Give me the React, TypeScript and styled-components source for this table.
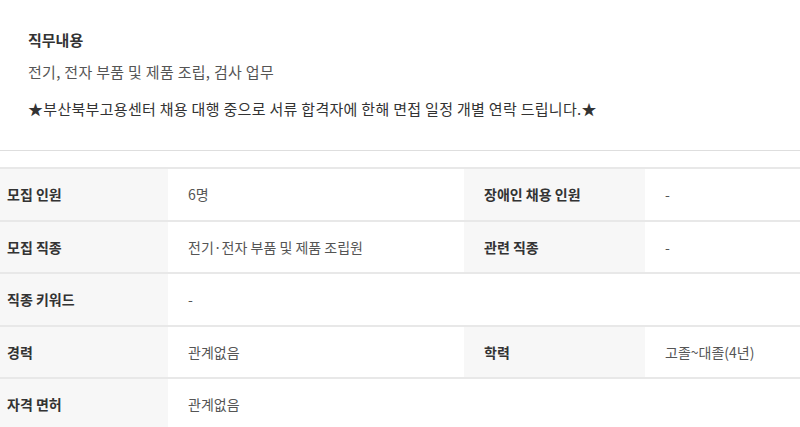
import styled, { createGlobalStyle } from 'styled-components';

const GlobalStyle = createGlobalStyle`
  body {
    margin: 0;
    background: #fff;
    font-family: "Noto Sans CJK KR", "Noto Sans", sans-serif;
    font-size: 14px;
    color: #333;
  }
`;

const Intro = styled.section`
  padding: 30px 28px 31px;
  border-bottom: 1px solid #dedede;
`;

const Title = styled.h3`
  margin: 0;
  font-size: 15px;
  line-height: 20px;
  font-weight: 700;
  color: #333;
`;

const Desc = styled.p<{ $gap: number; $dark?: boolean }>`
  margin: ${(p) => p.$gap}px 0 0;
  line-height: 20px;
  font-size: 15px;
  letter-spacing: 0.3px;
  color: ${(p) => (p.$dark ? '#333' : '#555')};
`;

const Table = styled.div`
  margin-top: 16px;
  display: grid;
  grid-template-columns: 168px 296px 181px 1fr;
  border-top: 2px solid #e8e8e8;
`;

const Label = styled.div<{ $inner?: boolean }>`
  display: flex;
  align-items: center;
  height: 50.5px;
  padding-left: ${(p) => (p.$inner ? '20px' : '7px')};
  background: #f7f7f7;
  border-bottom: 2px solid #e8e8e8;
  font-weight: 700;
  color: #333;
`;

const Value = styled.div<{ $span?: number }>`
  display: flex;
  align-items: center;
  height: 50.5px;
  padding-left: 20px;
  border-bottom: 2px solid #e8e8e8;
  color: #555;
  grid-column: span ${(p) => p.$span ?? 1};
`;

type Row = { label: string; value: string; label2?: string; value2?: string };

const rows: Row[] = [
  { label: '모집 인원', value: '6명', label2: '장애인 채용 인원', value2: '-' },
  { label: '모집 직종', value: '전기·전자 부품 및 제품 조립원', label2: '관련 직종', value2: '-' },
  { label: '직종 키워드', value: '-' },
  { label: '경력', value: '관계없음', label2: '학력', value2: '고졸~대졸(4년)' },
  { label: '자격 면허', value: '관계없음' },
];

export default function App() {
  return (
    <>
      <GlobalStyle />
      <Intro>
        <Title>직무내용</Title>
        <Desc $gap={12}>전기, 전자 부품 및 제품 조립, 검사 업무</Desc>
        <Desc $gap={17} $dark>
          ★부산북부고용센터 채용 대행 중으로 서류 합격자에 한해 면접 일정 개별 연락 드립니다.★
        </Desc>
      </Intro>
      <Table>
        {rows.map((r) =>
          r.label2
            ? [
                <Label key={r.label}>{r.label}</Label>,
                <Value key={r.label + 'v'}>{r.value}</Value>,
                <Label key={r.label2} $inner>
                  {r.label2}
                </Label>,
                <Value key={r.label2 + 'v'}>{r.value2}</Value>,
              ]
            : [
                <Label key={r.label}>{r.label}</Label>,
                <Value key={r.label + 'v'} $span={3}>
                  {r.value}
                </Value>,
              ]
        )}
      </Table>
    </>
  );
}
